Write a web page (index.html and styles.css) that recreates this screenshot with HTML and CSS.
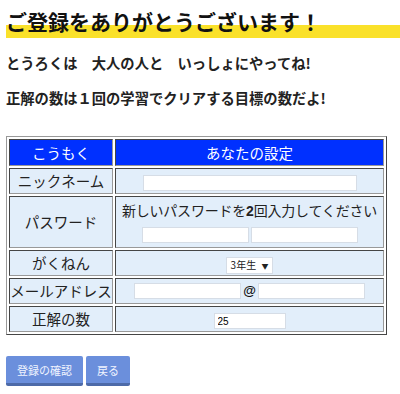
FILE: index.html
```html
<!DOCTYPE html>
<html lang="ja">
<head>
    <meta charset="UTF-8">
    <meta name="viewport" content="width=device-width, initial-scale=1.0">
    <title>ご登録</title>
    <link rel="stylesheet" href="styles.css">
</head>
<body>
    <h1 class="title">ご登録をありがとうございます！</h1>

    <p class="lead">とうろくは　大人の人と　いっしょにやってね!</p>
    <p class="lead">正解の数は１回の学習でクリアする目標の数だよ!</p>

    <table class="form-table">
        <tr>
            <th class="col-label">こうもく</th>
            <th>あなたの設定</th>
        </tr>
        <tr>
            <td>ニックネーム</td>
            <td><input type="text" class="input-wide"></td>
        </tr>
        <tr>
            <td>パスワード</td>
            <td>
                <div class="note">新しいパスワードを<b>2</b>回入力してください</div>
                <div class="pair pair-pass">
                    <input type="password" class="input-half">
                    <input type="password" class="input-half">
                </div>
            </td>
        </tr>
        <tr>
            <td>がくねん</td>
            <td>
                <span class="select">3年生 <span class="arrow">&#9660;</span></span>
            </td>
        </tr>
        <tr>
            <td>メールアドレス</td>
            <td>
                <div class="pair">
                    <input type="text" class="input-half">
                    <span class="at">@</span>
                    <input type="text" class="input-half">
                </div>
            </td>
        </tr>
        <tr>
            <td>正解の数</td>
            <td><input type="text" class="input-num" value="25"></td>
        </tr>
    </table>

    <div class="actions">
        <button class="btn">登録の確認</button>
        <button class="btn">戻る</button>
    </div>
</body>
</html>
```

FILE: styles.css
```css
body {
    margin: 0;
    padding: 0 6px;
    font-family: "Noto Sans CJK JP", "Noto Sans", sans-serif;
    color: #222;
    background-color: #fff;
}

.title {
    margin: 8px -6px 0 0;
    padding: 0;
    height: 30px;
    font-size: 21px;
    font-weight: bold;
    line-height: 26px;
    color: #111;
    background: linear-gradient(to bottom, transparent 17px, #fae12a 17px);
}

.lead {
    margin: 15px 0 0 0;
    font-size: 14.3px;
    font-weight: bold;
    line-height: 20px;
    color: #222;
}

.lead + .lead {
    margin-top: 15px;
}

.form-table {
    margin-top: 28px;
    width: 381px;
    border: 1px outset #999;
    border-collapse: separate;
    border-spacing: 2px;
}

.form-table th,
.form-table td {
    border: 1px inset #999;
    text-align: center;
    padding: 0;
    font-size: 14.5px;
    line-height: 22px;
    white-space: nowrap;
}

.form-table th {
    background-color: #0030ff;
    color: #fff;
    font-weight: normal;
    height: 25px;
}

.form-table td {
    background-color: #e2eefa;
    color: #222;
    height: 24px;
}

.col-label {
    width: 102px;
}

.note {
    font-size: 14px;
    line-height: 26px;
    letter-spacing: -0.2px;
}

.note b {
    font-family: "Liberation Sans", Arial, sans-serif;
    font-weight: bold;
}

.pair {
    display: flex;
    justify-content: center;
    align-items: center;
    gap: 2px;
}

.pair-pass {
    padding: 3px 0 4px;
}

input {
    font-family: "Liberation Sans", Arial, sans-serif;
    font-size: 10px;
    height: 16px;
    padding: 0 3px;
    border: 1px solid #d6dde6;
    background-color: #fff;
    box-sizing: border-box;
    vertical-align: middle;
}

.input-wide {
    width: 214px;
}

.input-half {
    width: 107px;
}

.input-num {
    width: 72px;
}

.at {
    font-family: "Liberation Sans", Arial, sans-serif;
    font-weight: bold;
    font-size: 13px;
    color: #111;
}

.select {
    display: inline-block;
    font-size: 10px;
    line-height: 14px;
    padding: 0 4px;
    background-color: #fff;
    border: 1px solid #d6dde6;
    vertical-align: middle;
}

.arrow {
    font-size: 7px;
    margin-left: 3px;
}

.actions {
    margin-top: 21px;
    display: flex;
    gap: 3px;
}

.btn {
    font-family: "Noto Sans CJK JP", sans-serif;
    font-size: 11px;
    color: #f0f4ff;
    background-color: #6b8fdc;
    border: none;
    border-bottom: 3px solid #4d6aa8;
    border-radius: 2px;
    height: 30px;
    padding: 0 11px;
    cursor: pointer;
}
```
